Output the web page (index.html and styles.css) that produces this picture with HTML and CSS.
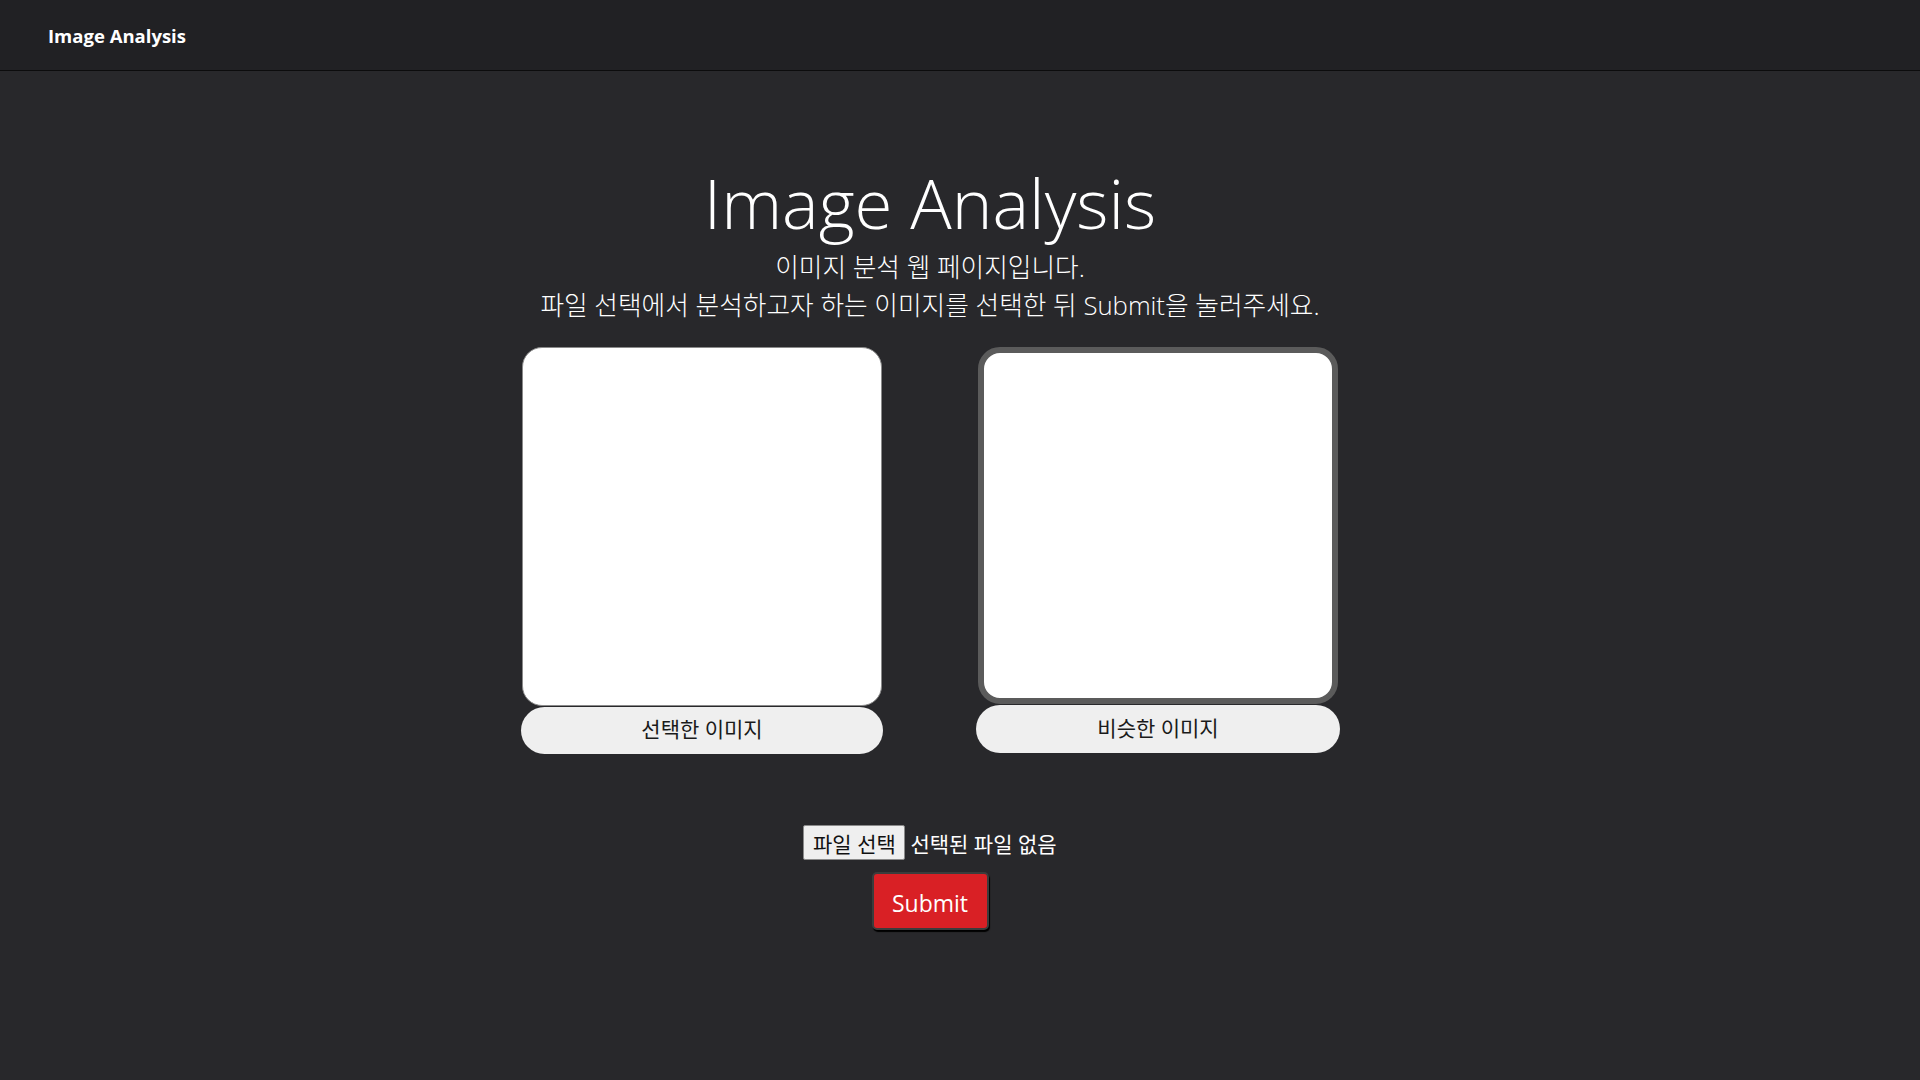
FILE: index.html
```html
<!DOCTYPE html>
<html lang="ko">
<head>
<meta charset="utf-8">
<title>Image Analysis</title>
<link rel="stylesheet" href="styles.css">
</head>
<body>
<header class="navbar">
  <span class="brand">Image Analysis</span>
</header>
<main class="main">
  <h1 class="title">Image Analysis</h1>
  <p class="lead">이미지 분석 웹 페이지입니다.<br>파일 선택에서 분석하고자 하는 이미지를 선택한 뒤 Submit을 눌러주세요.</p>
  <div class="columns">
    <div class="col">
      <div class="img-box img-plain"></div>
      <button class="label-btn" type="button">선택한 이미지</button>
    </div>
    <div class="col">
      <div class="img-box img-framed"></div>
      <button class="label-btn" type="button">비슷한 이미지</button>
    </div>
  </div>
  <div class="file-row">
    <button class="file-btn" type="button">파일 선택</button>
    <span class="file-name">선택된 파일 없음</span>
  </div>
  <button class="submit" type="button">Submit</button>
</main>
</body>
</html>
```
FILE: styles.css
```css
html, body {
  margin: 0;
  padding: 0;
}
body {
  background: #28282b;
  color: #ffffff;
  font-family: "Open Sans", "Noto Sans CJK KR", sans-serif;
  min-height: 1080px;
}
.navbar {
  height: 70px;
  background: #212124;
  border-bottom: 1px solid #0c0c0d;
  display: flex;
  align-items: center;
  padding-left: 48px;
}
.brand {
  font-weight: 700;
  font-size: 18.5px;
  color: #ffffff;
}
.main {
  display: flex;
  flex-direction: column;
  align-items: center;
  padding: 91px 60px 0 0;
}
.title {
  margin: 0;
  font-weight: 300;
  font-size: 69px;
  line-height: 80px;
}
.lead {
  margin: 7px 0 0;
  font-size: 25.7px;
  font-weight: 300;
  line-height: 38px;
  text-align: center;
}
.columns {
  display: flex;
  gap: 94px;
  margin-top: 22px;
}
.col {
  width: 362px;
  display: flex;
  flex-direction: column;
  align-items: center;
}
.img-box {
  box-sizing: border-box;
  background: #ffffff;
  width: 360px;
  height: 359px;
}
.img-plain {
  border: 1px solid #8a8a8a;
  border-radius: 20px;
}
.img-framed {
  border: 6px solid #5b5b5b;
  border-radius: 22px;
  height: 357px;
}
.label-btn {
  width: 362px;
  height: 47px;
  margin-top: 1px;
  border: none;
  border-radius: 24px;
  background: #efefef;
  color: #1a1a1a;
  font-family: "Open Sans", "Noto Sans CJK KR", sans-serif;
  font-size: 21px;
  line-height: 44px;
  padding: 0 0 3px;
}
.img-framed + .label-btn {
  width: 364px;
  height: 48px;
}
.file-row {
  display: flex;
  align-items: center;
  gap: 5px;
  margin-top: 71px;
}
.file-btn {
  box-sizing: border-box;
  width: 102px;
  height: 35px;
  background: #efefef;
  border: 1px solid #8a8a8a;
  border-radius: 2px;
  color: #111111;
  font-family: "Open Sans", "Noto Sans CJK KR", sans-serif;
  font-size: 21px;
  padding: 0;
}
.file-name {
  font-size: 21px;
  color: #ffffff;
}
.submit {
  box-sizing: border-box;
  margin-top: 12px;
  width: 117px;
  height: 58px;
  background: #d92025;
  border: 2px solid #3c3c3c;
  border-radius: 5px;
  box-shadow: 1px 2px 1px #000000;
  color: #ffffff;
  font-family: "Open Sans", sans-serif;
  font-size: 23px;
  padding: 4px 0 0;
}
```
